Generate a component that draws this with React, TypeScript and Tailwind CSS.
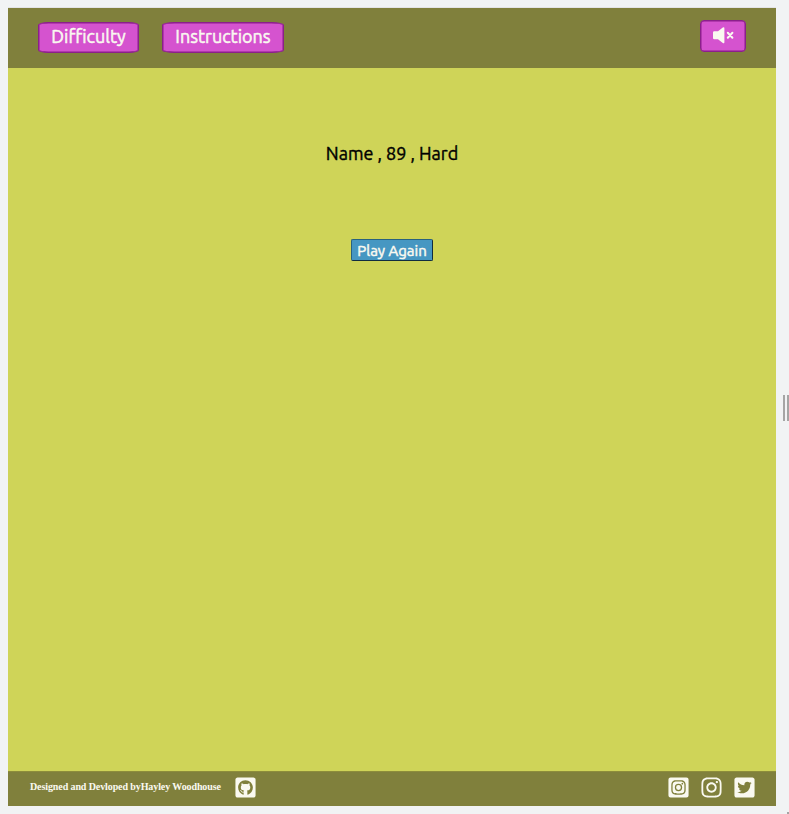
import { FaGithubSquare, FaInstagramSquare, FaInstagram, FaTwitterSquare } from "react-icons/fa";

function MuteIcon() {
  return (
    <svg width="21" height="17" viewBox="0 0 21 17" fill="currentColor" aria-label="Muted">
      <path d="M1.2 4.3H5L9.8 0.5Q11.4 -0.2 11.4 1.2V15.3Q11.4 16.8 9.8 16L5 12.2H1.2Q0 12.2 0 11V5.5Q0 4.3 1.2 4.3Z" />
      <path d="M14.8 5.8L19.4 10.7M19.4 5.8L14.8 10.7" fill="none" stroke="currentColor" strokeWidth="2" strokeLinecap="round" />
    </svg>
  );
}

export default function App() {
  return (
    <div className="relative h-[814px] w-[789px] overflow-hidden bg-[#f1f3f4] pl-2 pt-2">
      <div className="flex h-[798px] w-[768px] flex-col bg-[#cfd458] font-['Ubuntu','Noto_Sans',sans-serif] shadow-[0_-1px_0_#e4e4e6]">
        <header className="flex h-[60px] shrink-0 items-start bg-[#80803c] px-[30px]">
          <button className="mt-[14px] flex h-[31px] w-[101px] items-center justify-center rounded-[10%] border border-[#8b1f8b] bg-[#d553cf] pb-[3px] text-[18px] leading-none text-[#faf9f0] shadow-[inset_0_0_0_0.5px_#8b1f8b] [-webkit-text-stroke:0.5px]">
            Difficulty
          </button>
          <button className="ml-[23px] mt-[14px] flex h-[31px] w-[122px] items-center justify-center rounded-[10%] border border-[#8b1f8b] bg-[#d553cf] pb-[3px] text-[18px] leading-none text-[#faf9f0] shadow-[inset_0_0_0_0.5px_#8b1f8b] [-webkit-text-stroke:0.5px]">
            Instructions
          </button>
          <button className="ml-auto mt-3 flex h-8 w-[46px] items-center justify-center rounded-[4px] border border-[#8b1f8b] bg-[#d553cf] pb-[2px] text-[#faf9f0] shadow-[inset_0_0_0_0.5px_#8b1f8b]">
            <MuteIcon />
          </button>
        </header>
        <main className="flex flex-1 flex-col items-center">
          <p className="mt-[72px] whitespace-nowrap text-[18px] leading-[26px] text-black [-webkit-text-stroke:0.4px]">Name , 89 , Hard</p>
          <button className="mt-[73px] flex h-[22px] w-[82px] items-center justify-center whitespace-nowrap rounded-[2px] border border-b-[#102c40] border-l-[#28627e] border-r-[#102c40] border-t-[#28627e] bg-[#4697c2] text-[15px] leading-none text-[#faf9f0] [-webkit-text-stroke:0.5px]">
            Play Again
          </button>
        </main>
        <footer className="flex h-[35px] shrink-0 items-center border-t border-[#8d8d3b] bg-[#80803c] pb-[3px] pl-[22px] pr-[20.5px] text-[#faf9f0]">
          <span className="mb-[1px] w-[191px] whitespace-nowrap font-['Liberation_Serif',serif] text-[10px] font-bold leading-none tracking-[-0.1px]">
            Designed and Devloped byHayley Woodhouse
          </span>
          <FaGithubSquare className="ml-[13px]" size={23} />
          <div className="ml-auto flex items-center gap-[10px]">
            <FaInstagramSquare size={23} />
            <FaInstagram size={23} />
            <FaTwitterSquare size={23} />
          </div>
        </footer>
      </div>
      <div className="absolute left-[783px] top-[395px] flex h-[26px] gap-[2px]">
        <div className="w-[2px] bg-[#a5a5a5]" />
        <div className="w-[2px] bg-[#a5a5a5]" />
      </div>
      <div className="absolute bottom-0 right-0 h-[2px] w-[2px] bg-[#a5a5a5]" />
    </div>
  );
}
